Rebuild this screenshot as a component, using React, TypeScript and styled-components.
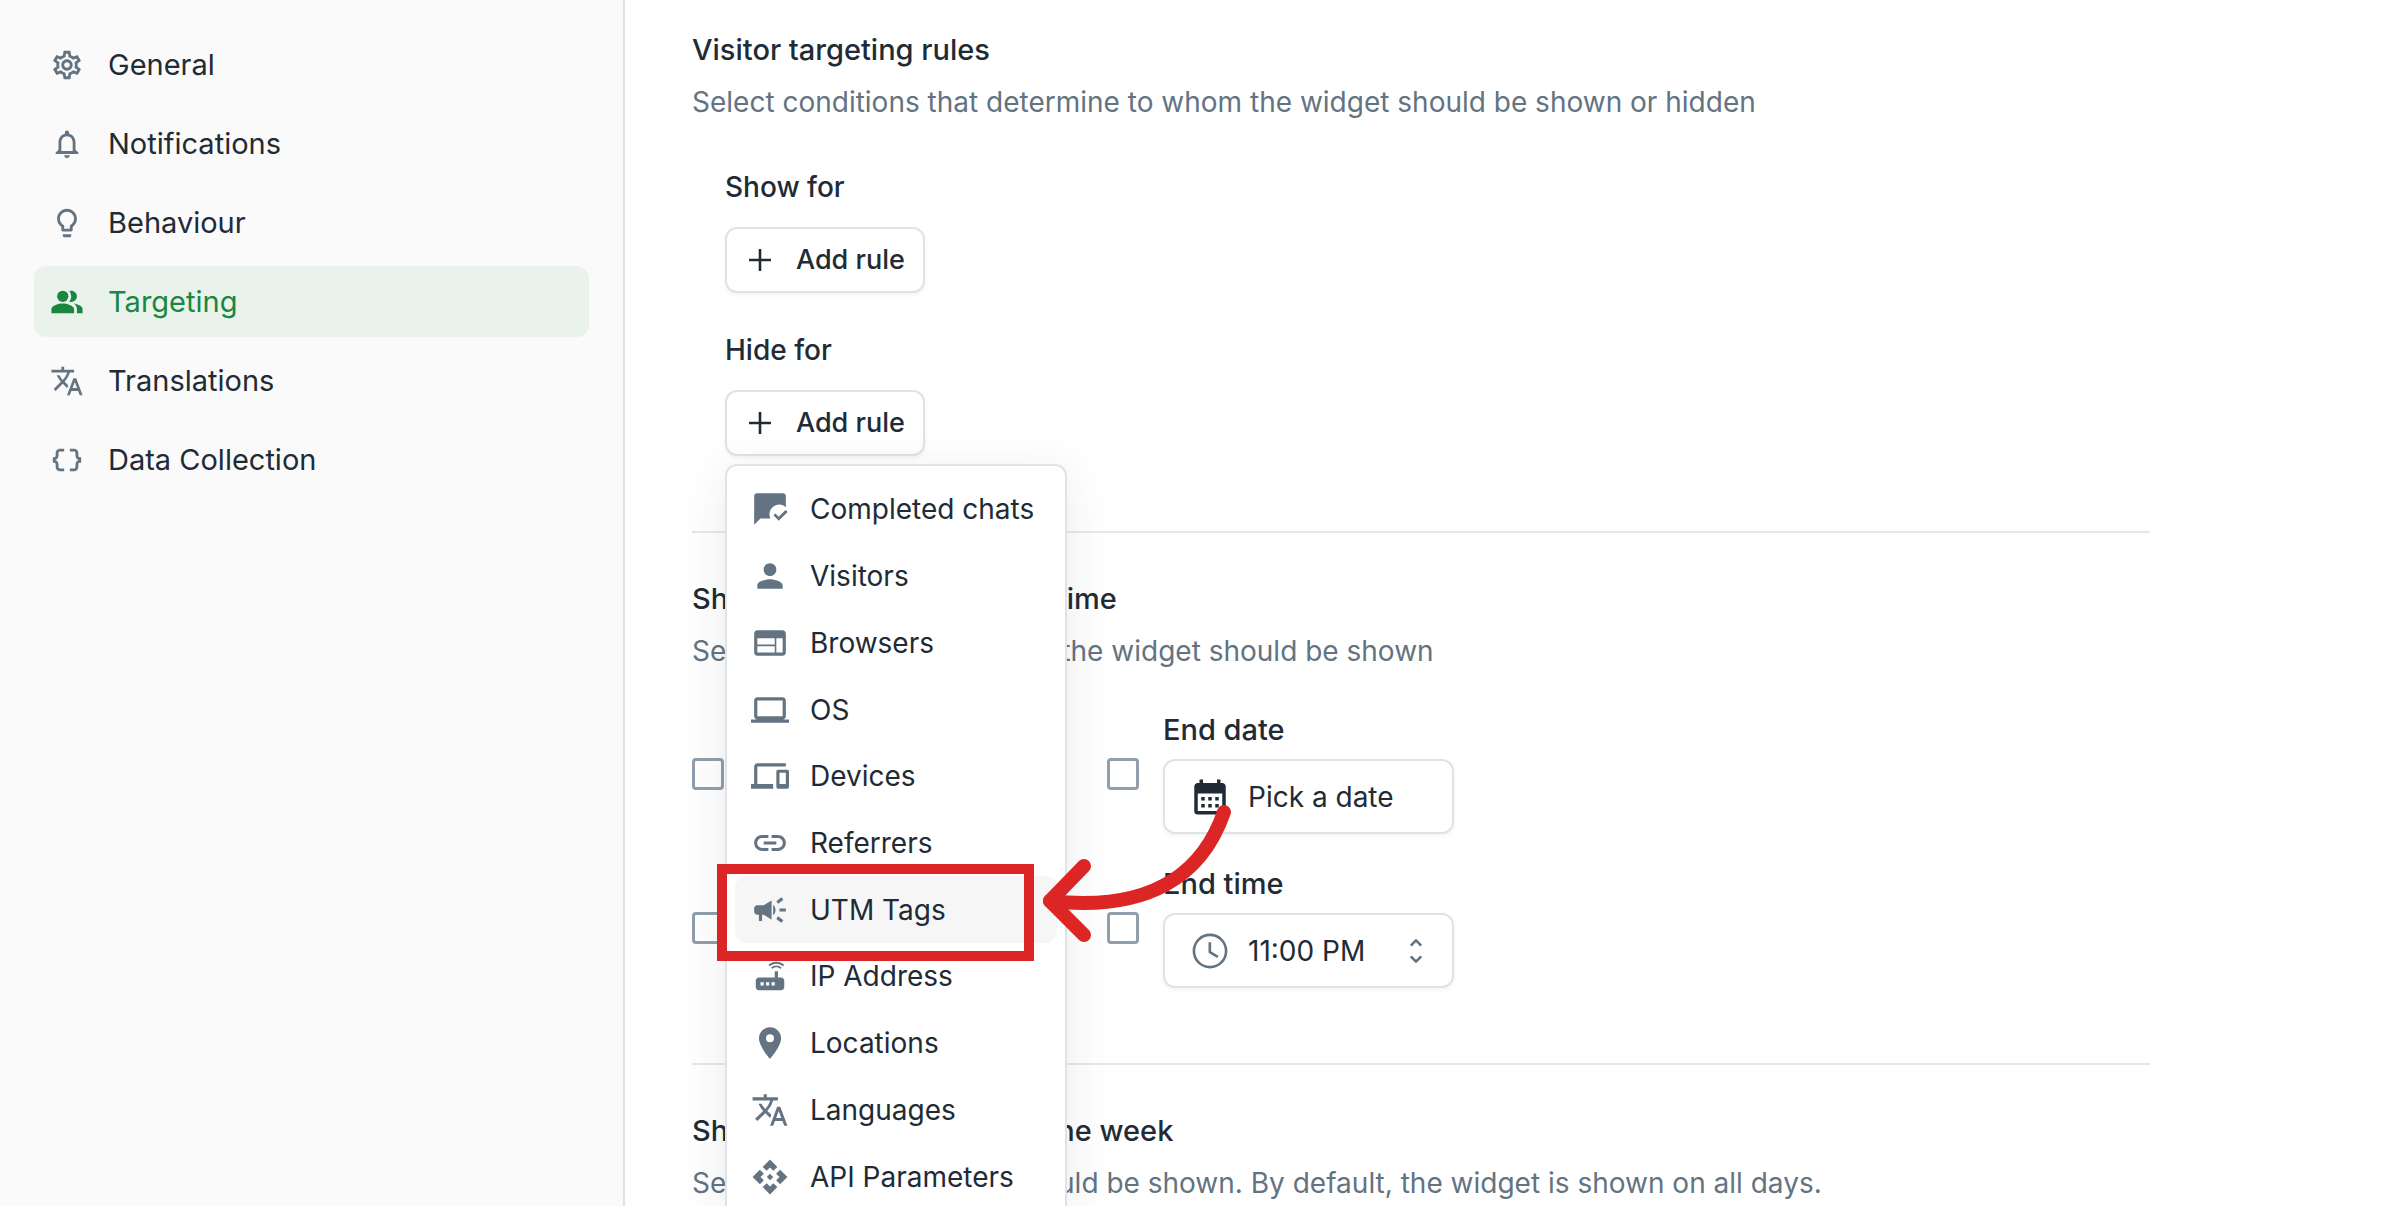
import React from 'react';
import styled, { createGlobalStyle } from 'styled-components';
import type { IconType } from 'react-icons';
import {
  MdApi,
  MdCalendarMonth,
  MdCampaign,
  MdDataObject,
  MdDevices,
  MdLaptop,
  MdLightbulbOutline,
  MdLink,
  MdLocationOn,
  MdNotificationsNone,
  MdOutlineSettings,
  MdPeopleAlt,
  MdPerson,
  MdRouter,
  MdTranslate,
  MdWeb,
} from 'react-icons/md';

const color = {
  text: '#212b36',
  muted: '#637381',
  border: '#dfe3e8',
  divider: '#e4e8ec',
  outline: '#919eab',
  green: '#1a8640',
  greenSoft: '#e9f3ec',
  red: '#dc2626',
};

const GlobalStyle = createGlobalStyle`
  *, *::before, *::after { box-sizing: border-box; }
  body {
    margin: 0;
    background: #fff;
    color: ${color.text};
    font-family: Inter, "Liberation Sans", sans-serif;
    font-size: 28px;
    line-height: 44px;
  }
  button, select { font: inherit; color: inherit; }
  h2, h3, p, ul { margin: 0; padding: 0; }
`;

const Page = styled.div`
  display: flex;
  height: 100vh;
  overflow: hidden;
`;

const Sidebar = styled.nav`
  flex: 0 0 625px;
  display: flex;
  flex-direction: column;
  gap: 8px;
  padding: 29px 34px;
  background: #fafafa;
  border-right: 2px solid ${color.border};
`;

const NavLink = styled.a<{ $active?: boolean }>`
  display: flex;
  align-items: center;
  gap: 24px;
  height: 71px;
  padding: 0 16px;
  border-radius: 12px;
  font-size: 29px;
  text-decoration: none;
  color: ${(p) => (p.$active ? color.green : color.text)};
  background: ${(p) => (p.$active ? color.greenSoft : 'transparent')};

  svg {
    width: 34px;
    height: 34px;
    color: ${(p) => (p.$active ? color.green : color.muted)};
  }
`;

const Main = styled.main`
  flex: 1;
  min-width: 0;
  padding: 28px 67px 0;
`;

const Section = styled.section`
  max-width: 1458px;

  & + & {
    margin-top: 75px;
    padding-top: 44px;
    border-top: 2px solid ${color.divider};
  }
`;

const Title = styled.h2`
  font-size: 29px;
  font-weight: 500;
`;

const Description = styled.p`
  margin-top: 8px;
  color: ${color.muted};
`;

const Rules = styled.div`
  display: flex;
  flex-direction: column;
  gap: 35px;
  padding: 41px 0 0 33px;
`;

const RuleGroup = styled.div`
  position: relative;
  display: flex;
  flex-direction: column;
  align-items: flex-start;
  gap: 18px;
`;

const RuleTitle = styled.h3`
  font-size: 28px;
  font-weight: 500;
`;

const AddButton = styled.button`
  display: flex;
  align-items: center;
  gap: 21px;
  height: 66px;
  padding: 0 18px;
  border: 2px solid ${color.border};
  border-radius: 12px;
  background: #fff;
  box-shadow: 0 2px 4px rgba(33, 43, 54, 0.06);
  font-size: 27px;
  font-weight: 500;
`;

const Menu = styled.ul`
  position: absolute;
  top: calc(100% + 8px);
  left: 0;
  z-index: 1;
  display: grid;
  grid-auto-rows: 1fr;
  width: 342px;
  height: 756px;
  padding: 10px 8px 8px;
  list-style: none;
  background: #fff;
  border: 2px solid ${color.border};
  border-radius: 12px;
  box-shadow: 0 8px 48px rgba(33, 43, 54, 0.09);
`;

const MenuItem = styled.li`
  position: relative;
  display: flex;
`;

const MenuButton = styled.button<{ $highlighted?: boolean }>`
  flex: 1;
  display: flex;
  align-items: center;
  gap: 21px;
  padding: 0 16px;
  border: 0;
  border-radius: 12px;
  background: ${(p) => (p.$highlighted ? '#f6f6f6' : 'transparent')};
  white-space: nowrap;

  svg {
    flex: none;
    width: 38px;
    height: 38px;
    color: ${color.muted};
  }
`;

const HighlightBox = styled.span`
  position: absolute;
  top: -12px;
  left: -18px;
  z-index: 2;
  width: 317px;
  height: 97px;
  border: 10px solid ${color.red};
  pointer-events: none;
`;

const Arrow = styled.svg`
  position: absolute;
  top: -74px;
  left: 305px;
  z-index: 2;
  width: 200px;
  height: 150px;
  pointer-events: none;
`;

const Schedule = styled.div`
  display: grid;
  grid-template-columns: repeat(2, 347px);
  gap: 28px 68px;
  padding-top: 35px;
`;

const ScheduleField = styled.div`
  display: flex;
  align-items: center;
  gap: 24px;
`;

const Checkbox = styled.input`
  appearance: none;
  width: 32px;
  height: 32px;
  margin: 5px 0 0;
  border: 3px solid ${color.outline};
  border-radius: 4px;
  background: #fff;
`;

const Field = styled.div`
  flex: 1;
  display: flex;
  flex-direction: column;
  gap: 7px;
`;

const FieldLabel = styled.label`
  font-size: 29px;
  font-weight: 500;
`;

const controlBox = `
  height: 75px;
  border: 2px solid ${color.border};
  border-radius: 12px;
  background: #fff;
  box-shadow: 0 2px 4px rgba(33, 43, 54, 0.06);
`;

const DateButton = styled.button`
  ${controlBox}
  display: flex;
  align-items: center;
  gap: 17px;
  padding: 0 24px;

  svg {
    width: 42px;
    height: 42px;
  }
`;

const TimeBox = styled.div`
  ${controlBox}
  display: grid;
  grid-template-columns: 42px 1fr 24px;
  align-items: center;
  padding: 0 24px;
  color: ${color.muted};

  > * {
    grid-row: 1;
  }
`;

const TimeSelect = styled.select`
  grid-column: 1 / -1;
  align-self: stretch;
  appearance: none;
  padding: 0 0 0 59px;
  border: 0;
  background: transparent;
  color: ${color.text};
`;

const ChatCheckIcon = () => (
  <svg viewBox="0 0 24 24" aria-hidden="true">
    <path
      fill="currentColor"
      d="M4 2h16a2 2 0 0 1 2 2v6.9A6.1 6.1 0 0 0 12.3 18H6l-4 4V4a2 2 0 0 1 2-2z"
    />
    <path fill="none" stroke="currentColor" strokeWidth="1.8" d="M14.8 15.4l2.7 2.8 5-5" />
  </svg>
);

const PlusIcon = () => (
  <svg width="30" height="30" viewBox="0 0 30 30" aria-hidden="true">
    <path d="M15 4v22M4 15h22" stroke="currentColor" strokeWidth="2.6" fill="none" />
  </svg>
);

const ClockIcon = styled((props: React.SVGProps<SVGSVGElement>) => (
  <svg {...props} viewBox="0 0 24 24" aria-hidden="true">
    <g fill="none" stroke="currentColor" strokeWidth="1.5" strokeLinejoin="round">
      <circle cx="12" cy="12" r="9.2" />
      <path d="M11.9 7v5.6l4.6 2.8" />
    </g>
  </svg>
))`
  grid-column: 1;
  width: 42px;
  height: 42px;
`;

const ChevronsIcon = styled((props: React.SVGProps<SVGSVGElement>) => (
  <svg {...props} viewBox="0 0 24 28" aria-hidden="true">
    <g fill="none" stroke="currentColor" strokeWidth="2.6" strokeLinejoin="round">
      <path d="M6.8 8.6L12 3.4l5.2 5.2" />
      <path d="M6.8 19.4l5.2 5.2 5.2-5.2" />
    </g>
  </svg>
))`
  grid-column: 3;
  width: 24px;
  height: 28px;
`;

const navItems: { label: string; icon: IconType; active?: boolean }[] = [
  { label: 'General', icon: MdOutlineSettings },
  { label: 'Notifications', icon: MdNotificationsNone },
  { label: 'Behaviour', icon: MdLightbulbOutline },
  { label: 'Targeting', icon: MdPeopleAlt, active: true },
  { label: 'Translations', icon: MdTranslate },
  { label: 'Data Collection', icon: MdDataObject },
];

const ruleTypes: { label: string; icon: React.ElementType; highlighted?: boolean }[] = [
  { label: 'Completed chats', icon: ChatCheckIcon },
  { label: 'Visitors', icon: MdPerson },
  { label: 'Browsers', icon: MdWeb },
  { label: 'OS', icon: MdLaptop },
  { label: 'Devices', icon: MdDevices },
  { label: 'Referrers', icon: MdLink },
  { label: 'UTM Tags', icon: MdCampaign, highlighted: true },
  { label: 'IP Address', icon: MdRouter },
  { label: 'Locations', icon: MdLocationOn },
  { label: 'Languages', icon: MdTranslate },
  { label: 'API Parameters', icon: MdApi },
];

const Callout = () => (
  <>
    <HighlightBox />
    <Arrow viewBox="1040 800 200 150" aria-hidden="true">
      <g
        fill="none"
        stroke={color.red}
        strokeWidth="14"
        strokeLinecap="round"
        strokeLinejoin="round"
      >
        <path d="M1224 810C1202 874 1148 910 1050 899" />
        <path d="M1084 864L1050 899L1084 933" />
      </g>
    </Arrow>
  </>
);

const AddRule = (props: React.ButtonHTMLAttributes<HTMLButtonElement>) => (
  <AddButton type="button" {...props}>
    <PlusIcon />
    Add rule
  </AddButton>
);

const DateField = ({ id, label }: { id: string; label: string }) => (
  <ScheduleField>
    <Checkbox type="checkbox" aria-label={label} />
    <Field>
      <FieldLabel htmlFor={id}>{label}</FieldLabel>
      <DateButton type="button" id={id}>
        <MdCalendarMonth />
        Pick a date
      </DateButton>
    </Field>
  </ScheduleField>
);

const TimeField = ({ id, label, value }: { id: string; label: string; value: string }) => (
  <ScheduleField>
    <Checkbox type="checkbox" aria-label={label} />
    <Field>
      <FieldLabel htmlFor={id}>{label}</FieldLabel>
      <TimeBox>
        <ClockIcon />
        <ChevronsIcon />
        <TimeSelect id={id} defaultValue={value}>
          <option>{value}</option>
        </TimeSelect>
      </TimeBox>
    </Field>
  </ScheduleField>
);

export default function App() {
  return (
    <>
      <GlobalStyle />
      <Page>
        <Sidebar aria-label="Settings">
          {navItems.map(({ label, icon: Icon, active }) => (
            <NavLink key={label} href="#" $active={active} aria-current={active ? 'page' : undefined}>
              <Icon />
              {label}
            </NavLink>
          ))}
        </Sidebar>
        <Main>
          <Section>
            <Title>Visitor targeting rules</Title>
            <Description>
              Select conditions that determine to whom the widget should be shown or hidden
            </Description>
            <Rules>
              <RuleGroup>
                <RuleTitle>Show for</RuleTitle>
                <AddRule />
              </RuleGroup>
              <RuleGroup>
                <RuleTitle>Hide for</RuleTitle>
                <AddRule aria-haspopup="menu" aria-expanded />
                <Menu role="menu">
                  {ruleTypes.map(({ label, icon: Icon, highlighted }) => (
                    <MenuItem key={label} role="none">
                      <MenuButton type="button" role="menuitem" $highlighted={highlighted}>
                        <Icon />
                        {label}
                      </MenuButton>
                      {highlighted && <Callout />}
                    </MenuItem>
                  ))}
                </Menu>
              </RuleGroup>
            </Rules>
          </Section>
          <Section>
            <Title>Show at specific date and time</Title>
            <Description>Select the time range when the widget should be shown</Description>
            <Schedule>
              <DateField id="start-date" label="Start date" />
              <DateField id="end-date" label="End date" />
              <TimeField id="start-time" label="Start time" value="9:00 AM" />
              <TimeField id="end-time" label="End time" value="11:00 PM" />
            </Schedule>
          </Section>
          <Section>
            <Title>Show on specific days of the week</Title>
            <Description>
              Select when the widget should be shown. By default, the widget is shown on all days.
            </Description>
          </Section>
        </Main>
      </Page>
    </>
  );
}
